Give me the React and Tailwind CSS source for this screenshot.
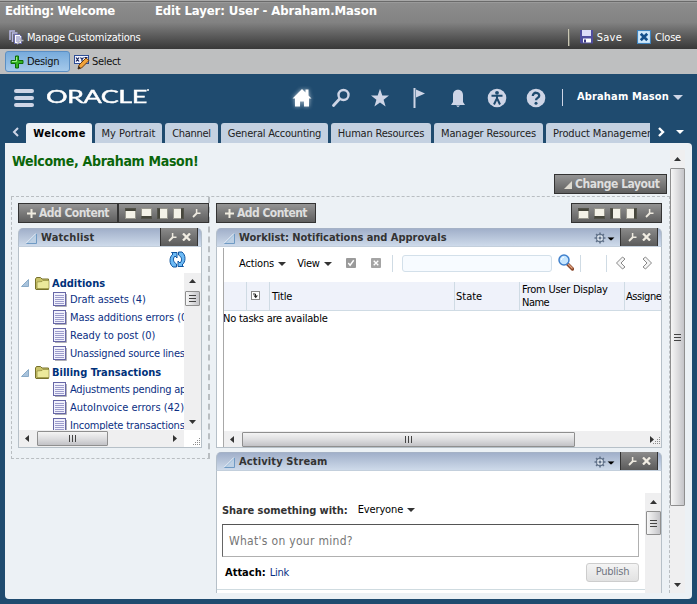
import { useLayoutEffect, useRef, useState } from "react";

/* Single-line label whose tracking is adjusted so that it spans w pixels. */
function T({ w, className = "", children }) {
  const ref = useRef(null);
  const [spacing, setSpacing] = useState(0);
  useLayoutEffect(() => {
    const natural = ref.current.offsetWidth;
    setSpacing((w - natural) / children.length);
  }, []);
  return (
    <span ref={ref} style={{ letterSpacing: spacing }} className={`inline-block shrink-0 whitespace-nowrap leading-none ${className}`}>
      {children}
    </span>
  );
}

function Caret({ className = "text-[#333]" }) {
  return (
    <svg width="8" height="4" viewBox="0 0 8 4" className={`shrink-0 ${className}`}>
      <path d="M0 0h8L4 4z" fill="currentColor" />
    </svg>
  );
}

function Wrench() {
  return (
    <svg width="9" height="10" viewBox="0 0 9 10" className="shrink-0">
      <path d="M1 9L5 5" stroke="#eeeae0" strokeWidth="1.8" />
      <path d="M4.6 1v4.2h3.9" stroke="#eeeae0" strokeWidth="1.5" fill="none" />
    </svg>
  );
}

function Cross() {
  return (
    <svg width="9" height="8" viewBox="0 0 9 8" className="shrink-0">
      <path d="M1 .5l7 7M8 .5l-7 7" stroke="#f0ece2" strokeWidth="2.3" />
    </svg>
  );
}

function Gear() {
  return (
    <svg width="12" height="12" viewBox="0 0 12 12" className="shrink-0">
      <path d="M6 .5v11M.5 6h11M2.100 2.100l7.800 7.800M9.900 2.100l-7.800 7.800" stroke="#61728a" strokeWidth="1.600" />
      <circle cx="6" cy="6" r="3.600" fill="#e3eaf2" stroke="#61728a" strokeWidth="1.100" />
      <path d="M6 3v6M3 6h6" stroke="#8493a8" strokeWidth=".8" />
      <circle cx="6" cy="6" r="1.2" fill="#61728a" />
    </svg>
  );
}

function Disclosure() {
  return (
    <svg width="11" height="11" viewBox="0 0 11 11" className="shrink-0">
      <path d="M10.500 .7v9.800H.7z" fill="#bdd0e4" stroke="#6f9ac4" />
      <path d="M.5 10L10 .5" stroke="#f4f9ff" />
    </svg>
  );
}

function LayoutTools() {
  const cell = "h-[11px] w-[11px] border-[#46463c] bg-[#f4f2e8] outline outline-[#5a5a52]/60 -outline-offset-1";
  return (
    <div className="flex h-5 w-[91px] items-center gap-[5px] border border-[#333] bg-linear-to-b from-[#929292] to-[#5f5f5f] pl-[6px]">
      <i className={`${cell} border-t-[3px]`} />
      <i className={`${cell} border-b-[3px]`} />
      <i className={`${cell} border-l-[3px]`} />
      <i className={`${cell} border-r-[3px]`} />
      <span className="ml-[3px]"><Wrench /></span>
    </div>
  );
}

function AddContent() {
  return (
    <div className="flex h-5 w-[100px] items-center border border-[#333] bg-linear-to-b from-[#959595] to-[#5f5f5f] pb-px pl-2">
      <svg width="9" height="9" viewBox="0 0 9 9" className="mr-[3px] mt-[2px]"><path d="M4.500 0v9M0 4.500h9" stroke="#f0ece0" strokeWidth="2" /></svg>
      <T w={70} className="text-[12px] font-bold text-[#dedede]">Add Content</T>
    </div>
  );
}

function PanelHeader({ title, w, gear }) {
  return (
    <div className="flex h-[19px] shrink-0 items-start rounded-t-[5px] border border-b-[#c3cfdc] border-x-[#b3bfcb] border-t-[#a5b2c6] bg-linear-to-b from-[#a1b0ca] to-[#cedaea] pl-[7px] pr-[3px]">
      <div className="mt-1"><Disclosure /></div>
      <T w={w} className="ml-[4px] mt-[3px] text-[11px] font-bold text-[#333]">{title}</T>
      <div className="ml-auto flex">
        {gear && (
          <div className="mr-[5px] flex items-center gap-[1px]">
            <Gear />
            <div className="mt-[3px] scale-90"><Caret className="text-black" /></div>
          </div>
        )}
        <div className="-mt-px flex h-[18px] w-[38px] items-center gap-[5px] border-x border-[#333] bg-linear-to-b from-[#8b8b8b] to-[#5b5b5b] pl-[7px]">
          <Wrench />
          <Cross />
        </div>
      </div>
    </div>
  );
}

function Arrow({ dir }) {
  const paths = { up: "M0 5h7L3.5 1z", down: "M0 1h7L3.5 5z", left: "M5 0v7L1 3.5z", right: "M1 0v7l4-3.5z" };
  const flat = dir === "up" || dir === "down";
  return (
    <svg width={flat ? 7 : 6} height={flat ? 6 : 7} className="shrink-0">
      <path d={paths[dir]} fill="#333" />
    </svg>
  );
}

function Grip({ upright }) {
  return upright ? (
    <span className="flex gap-[2px]"><i className="h-[7px] w-px bg-[#444]" /><i className="h-[7px] w-px bg-[#444]" /><i className="h-[7px] w-px bg-[#444]" /></span>
  ) : (
    <span className="flex flex-col gap-[2px]"><i className="h-px w-[7px] bg-[#444]" /><i className="h-px w-[7px] bg-[#444]" /><i className="h-px w-[7px] bg-[#444]" /></span>
  );
}

const vThumb = "flex w-[15px] shrink-0 items-center justify-center rounded-[1px] border border-[#8f8f8f] bg-linear-to-r from-[#f6f6f6] via-[#dedee0] to-[#c4c4c8]";
const hThumb = "flex h-[15px] shrink-0 items-center justify-center rounded-[1px] border border-[#8f8f8f] bg-linear-to-b from-[#f4f4f4] via-[#dedee0] to-[#c2c2c6]";

function Resizer() {
  return (
    <svg width="9" height="9" className="mt-auto ml-auto shrink-0">
      {[[7, 0], [5, 2], [7, 2], [3, 4], [5, 4], [7, 4], [1, 6], [3, 6], [5, 6], [7, 6]].map(([x, y]) => (
        <rect key={`${x}-${y}`} x={x} y={y} width="1" height="1" fill="#8c8c8c" />
      ))}
    </svg>
  );
}

function Folder({ label, w, className = "" }) {
  return (
    <div className={`flex shrink-0 items-center pl-[2px] ${className}`}>
      <svg width="8" height="8" viewBox="0 0 8 8"><path d="M7.5 .5v7H.5z" fill="#a9c3dc" stroke="#8aabc8" /></svg>
      <svg width="15" height="13" viewBox="0 0 15 13" className="ml-[6px]">
        <path d="M.5 12V2l1-1.5h4L7 2h6.500v10.500H1z" fill="#c9c36a" stroke="#77712b" />
        <path d="M2 11.500V5l5-.5 1-1h6v8z" fill="#ece99b" stroke="#8f8a3c" strokeWidth=".7" />
      </svg>
      <T w={w} className="ml-[2px] text-[11px] font-bold text-[#00317a]">{label}</T>
    </div>
  );
}

function Doc({ label, w }) {
  return (
    <div className="flex h-[18px] shrink-0 items-center pl-[34px]">
      <svg width="14" height="15" viewBox="0 0 14 15" className="shrink-0">
        <path d="M2 14.500h11.500V2" fill="none" stroke="#b0b0b8" />
        <rect x=".5" y=".5" width="12" height="13" fill="#f1f1fc" stroke="#6666a6" />
        <path d="M2 3.500h9M2 5.500h9M2 7.500h9M2 9.500h9M2 11.500h9" stroke="#9c9ccc" />
      </svg>
      <T w={w} className="ml-[3px] text-[11px] text-[#0b2f83]">{label}</T>
    </div>
  );
}

const tabs = [
  ["My Portrait", 54, "w-[67px]"],
  ["Channel", 39, "w-[53px]"],
  ["General Accounting", 93, "w-[107px]"],
  ["Human Resources", 86, "w-[100px]"],
  ["Manager Resources", 95, "w-[109px]"],
];

function TopBars() {
  return (
    <>
      <div className="flex h-[49px] flex-col border-t border-[#a8a8a8] bg-linear-to-b from-[#8e8e8e] via-[#828282] via-45% to-[#383838]">
        <div className="h-px shrink-0 bg-[#6a6a6a]" />
        <div className="h-px shrink-0 bg-[#9a9a9a]" />
        <div className="flex h-[18px] items-start pl-[5px] pt-[1px] text-[13px] font-bold text-white">
          <T w={110}>Editing: Welcome</T>
          <T w={222} className="ml-[40px]">Edit Layer: User - Abraham.Mason</T>
        </div>
        <div className="flex h-[28px] items-center pl-[9px] pt-[4px] text-[11px] text-white">
          <svg width="15" height="15" viewBox="0 0 15 15" className="mr-[3px]">
            <path d="M1 10V1h5M3.500 12V3h5" fill="none" stroke="#b9b9e6" strokeWidth="1.5" />
            <path d="M5.500 4.500h5l2 2v7h-7z" fill="#fff" stroke="#6c6cae" />
            <path d="M7 7h4M7 9h4M7 11h3" stroke="#7777b8" />
            <path d="M8 14l4-4M11.500 7.500v3h3" stroke="#b9bac2" strokeWidth="1.700" fill="none" />
          </svg>
          <T w={114}>Manage Customizations</T>
          <i className="ml-auto h-[17px] w-[2px] border-l border-[#c9c6b4] bg-[#77776c]" />
          <svg width="13" height="14" viewBox="0 0 13 14" className="ml-[10px]">
            <path d="M0 0h13v13.500H1L0 12.500z" fill="#4f4d9e" />
            <path d="M2 0h9v6H2z" fill="#dcdcf8" /><path d="M3 8.500h8v4H3z" fill="#fff" /><path d="M4 9.500h2v3H4z" fill="#3a3880" />
          </svg>
          <T w={25} className="ml-[4px]">Save</T>
          <svg width="14" height="14" viewBox="0 0 13 13" className="ml-[15px]">
            <rect x=".5" y=".5" width="12" height="12" fill="#cfe8fb" stroke="#3f83bd" />
            <path d="M3.500 3.500l6 6M9.500 3.500l-6 6" stroke="#14508c" strokeWidth="2.500" />
          </svg>
          <T w={26} className="ml-[4px] mr-[16px]">Close</T>
        </div>
      </div>
      <div className="flex h-[25px] items-center bg-[#bebfc0] pl-[5px] text-[11px] text-[#111]">
        <div className="flex h-[21px] w-[65px] items-center rounded-[3px] border border-[#5b8fc4] bg-linear-to-b from-[#77abdc] to-[#a5c9ea] pl-[4px]">
          <svg width="14" height="14" viewBox="0 0 14 14"><path d="M5.500 1h3v4.500H13v3H8.500V13h-3V8.500H1v-3h4.500z" fill="#35b522" stroke="#0d6a0a" /><path d="M6.500 2v4.500H2" stroke="#9bea86" fill="none" /></svg>
          <T w={32} className="ml-[3px]">Design</T>
        </div>
        <svg width="16" height="16" viewBox="0 0 16 16" className="ml-[4px] shrink-0">
          <rect x=".5" y="1.500" width="14" height="8" fill="#f2f4ff" stroke="#2d4d96" />
          <path d="M2 3.500l3 4M5 3.500l-3 4M6.500 3.500l1.500 2v2M9.500 3.500l-1.500 2M10.500 3.500h3" stroke="#14235c" strokeWidth="1.200" fill="none" />
          <path d="M4 15l1-4 7-7 3 2.500-7.500 7.500z" fill="#f2a33a" stroke="#6b3b10" /><path d="M4 15l.7-3 2 2z" fill="#222" />
        </svg>
        <T w={29} className="ml-[2px]">Select</T>
      </div>
    </>
  );
}

function Brand() {
  const c = "#ced5e6";
  return (
    <div className="flex h-[47px] items-center pl-[14px] pr-[14px]">
      <div className="flex w-5 flex-col gap-[3px]">
        <i className="h-1 rounded-[2px] bg-[#ced5e6]" /><i className="h-1 rounded-[2px] bg-[#ced5e6]" /><i className="h-1 rounded-[2px] bg-[#ced5e6]" />
      </div>
      <div className="ml-[12px] mt-[-4px] flex w-[104px] items-start text-white">
        <div className="mt-[1px] w-[101px] shrink-0">
          <div className="w-[66px] origin-left scale-x-[1.5] font-['Lato'] text-[18px] leading-none [-webkit-text-stroke:0.4px_white]">
            <T w={67}>ORACLE</T>
          </div>
        </div>
        <i className="mt-[3px] h-[2px] w-[2px] rounded-full bg-white" />
      </div>
      <div className="ml-[142px] flex items-center gap-[19px]">
        <svg width="28" height="24" viewBox="0 0 28 24" className="-mx-[4px]">
          <path d="M4.500 12.500L14 3l3.500 3.500V3.500h3V9.500L23.500 12.500h-2.500v8h-5v-5h-4v5H7v-8z" fill="#fff" className="drop-shadow-[0_0_2px_#ffffffaa]" />
        </svg>
        <svg width="20" height="20" viewBox="0 0 20 20"><circle cx="12.500" cy="7" r="5" stroke={c} strokeWidth="2.400" fill="none" /><path d="M8.500 11L2.500 17.500" stroke={c} strokeWidth="2.800" strokeLinecap="round" /></svg>
        <svg width="20" height="20" viewBox="0 0 20 20"><path d="M10 .8l2.300 6.700H19l-5.400 4.200 2 6.800L10 14.500l-5.600 4 2-6.800L1 7.500h6.700z" fill={c} /></svg>
        <svg width="20" height="20" viewBox="0 0 20 20"><path d="M4.500 0h2v20h-2zM7 1.500l9 4-9 4z" fill={c} /></svg>
        <svg width="20" height="20" viewBox="0 0 20 20"><path d="M5 14V7c0-7 10-7 10 0v7l2 3H3zM8 17.500h4l-2 1.800z" fill={c} /></svg>
        <svg width="20" height="20" viewBox="0 0 20 20"><circle cx="10" cy="10" r="9.300" fill={c} /><circle cx="10" cy="4.800" r="1.900" fill="#1f4b6f" /><path d="M4.500 7.800h11M10 8v4M9.600 11L7 16.500M10.400 11l2.600 5.500" stroke="#1f4b6f" strokeWidth="2" /></svg>
        <svg width="20" height="20" viewBox="0 0 20 20"><circle cx="10" cy="10" r="9.300" fill={c} /><path d="M6.800 8c0-4.500 6.600-4 6.400-.3 0 2.300-3.200 2-3.200 4.600" fill="none" stroke="#1f4b6f" strokeWidth="2.300" /><circle cx="10" cy="15.200" r="1.500" fill="#1f4b6f" /></svg>
      </div>
      <i className="ml-auto h-[17px] w-px bg-[#ced5e6]" />
      <T w={92} className="-mt-[2px] ml-[14px] text-[11px] font-bold text-white">Abraham Mason</T>
      <div className="ml-[4px] -mt-px"><svg width="10" height="5"><path d="M0 0h10L5 5z" fill={c} /></svg></div>
    </div>
  );
}

function TabStrip() {
  return (
    <div className="flex h-[22px] items-end pl-[12px] text-[11px] text-[#222]">
      <svg width="8" height="10" viewBox="0 0 8 10" className="mb-[6px] mr-[6px] shrink-0"><path d="M6 1L2 5l4 4" fill="none" stroke="#ced5e6" strokeWidth="2" /></svg>
      <div className="flex h-[20px] w-[66px] shrink-0 items-center justify-center rounded-t-[3px] bg-[#ecf1f6] pl-px pt-px font-bold text-black"><T w={52}>Welcome</T></div>
      {tabs.map(([label, w, width]) => (
        <div key={label} className={`ml-[3px] flex h-[20px] shrink-0 items-center justify-center rounded-t-[3px] bg-[#c4d1e1] pt-px ${width}`}>
          <T w={w}>{label}</T>
        </div>
      ))}
      <div className="ml-[3px] flex h-[20px] w-[104px] shrink-0 items-center overflow-hidden rounded-tl-[3px] bg-[#c4d1e1] pl-[7px] pt-px">
        <T w={104}>Product Management</T>
      </div>
      <svg width="7" height="10" viewBox="0 0 7 10" className="mb-[6px] ml-[8px] shrink-0"><path d="M1 1l4 4-4 4" fill="none" stroke="#fff" strokeWidth="2.400" /></svg>
      <div className="mb-[9px] ml-[11px]"><Caret className="text-white" /></div>
    </div>
  );
}

function Watchlist() {
  return (
    <div className="flex h-[262px] w-[199px] shrink-0 flex-col border-b border-l border-r-[2px] border-dashed border-[#b9bec2] pl-[6px] pt-[6px]">
      <div className="-mr-[2px] flex"><AddContent /><LayoutTools /></div>
      <div className="mt-[5px] flex h-[220px] w-[184px] flex-col">
        <PanelHeader title="Watchlist" w={53} />
        <div className="flex flex-1 flex-col border border-t-0 border-[#b6c0c8] bg-white">
          <div className="flex h-[26px] shrink-0 justify-end pr-[15px] pt-[4px]">
            <svg width="17" height="17" viewBox="0 0 17 17">
              <path d="M7.500 16H4C0 13 0 6 4 3L2.500 1.500H8V7L6 5C3.500 7.500 4 11 7.500 13z" fill="#6cbaf5" stroke="#11559f" />
              <path d="M9.500 1H13C17 4 17 11 13 14l1.500 1.500H9V10l2 2C13.500 9.500 13 6 9.500 4z" fill="#6cbaf5" stroke="#11559f" />
            </svg>
          </div>
          <div className="flex h-[157px] shrink-0">
            <div className="flex flex-1 flex-col overflow-hidden">
              <Folder label="Additions" w={53} className="h-[17px] pt-[3px]" />
              <Doc label="Draft assets (4)" w={76} />
              <Doc label="Mass additions errors (0)" w={121} />
              <Doc label="Ready to post (0)" w={85} />
              <Doc label="Unassigned source lines" w={115} />
              <Folder label="Billing Transactions" w={109} className="h-[18px] pt-[3px]" />
              <Doc label="Adjustments pending approval" w={146} />
              <Doc label="AutoInvoice errors (42)" w={114} />
              <Doc label="Incomplete transactions" w={115} />
            </div>
            <div className="flex w-[17px] shrink-0 flex-col items-center bg-[#efeff0] py-[5px]">
              <Arrow dir="up" />
              <div className={`${vThumb} mt-[7px] h-[15px]`}><Grip /></div>
              <div className="mt-auto"><Arrow dir="down" /></div>
            </div>
          </div>
          <div className="flex flex-1">
            <div className="flex w-[165px] items-center bg-[#efeff0] pl-[5px]">
              <Arrow dir="left" />
              <div className={`${hThumb} ml-[7px] w-[71px]`}><Grip upright /></div>
              <div className="ml-auto mr-[6px]"><Arrow dir="right" /></div>
            </div>
            <Resizer />
          </div>
        </div>
      </div>
    </div>
  );
}

function Worklist() {
  const sep = "h-[17px] w-px shrink-0 bg-[#cfdbe4]";
  const col = "flex shrink-0 items-center border-r border-[#cfdbe4] pl-[2px]";
  return (
    <div className="mt-[5px] flex h-[220px] shrink-0 flex-col">
      <PanelHeader title="Worklist: Notifications and Approvals" w={207} gear />
      <div className="flex flex-1 flex-col overflow-hidden border border-t-0 border-[#b6c0c8] bg-white pl-[6px] pt-px text-[11px] text-black">
        <div className="flex min-w-0 flex-1 flex-col overflow-hidden border-l border-[#a8a8a8]">
          <div className="flex h-[34px] shrink-0 items-center pb-[3px] pl-[15px]">
            <T w={35}>Actions</T>
            <div className="ml-[4px]"><Caret /></div>
            <T w={22} className="ml-[11px]">View</T>
            <div className="ml-[4px]"><Caret /></div>
            <svg width="10" height="10" viewBox="0 0 11 11" className="-mt-[2px] ml-[14px] shrink-0"><rect width="11" height="11" rx="1" fill="#9a9a9a" /><path d="M2.500 5.500l2 2.500 4-5.500" fill="none" stroke="#fff" strokeWidth="1.500" /></svg>
            <svg width="10" height="10" viewBox="0 0 11 11" className="-mt-[2px] ml-[15px] shrink-0"><rect width="11" height="11" rx="1" fill="#a4a4a4" /><path d="M3 3l5 5M8 3L3 8" stroke="#fff" strokeWidth="1.500" /></svg>
            <i className={`${sep} ml-[11px]`} />
            <div className="ml-[9px] h-[17px] w-[150px] shrink-0 rounded-[3px] border border-[#d3e0ea] bg-[#f7fbff]" />
            <svg width="16" height="17" viewBox="0 0 16 17" className="-mt-[2px] ml-[6px] shrink-0">
              <path d="M9.500 10l5 5" stroke="#8b4a2c" strokeWidth="3.400" strokeLinecap="round" /><path d="M10 10l4.500 4.500" stroke="#e3a27e" strokeWidth="1.200" />
              <circle cx="6" cy="6" r="5" fill="#c6e6ff" stroke="#4080cc" strokeWidth="1.500" /><path d="M3.500 6c0-2 1-2.700 2.500-2.700" stroke="#fff" fill="none" />
            </svg>
            <i className={`${sep} ml-[6px]`} />
            <i className={`${sep} ml-[25px]`} />
            <svg width="11" height="14" viewBox="0 0 11 14" className="-mt-[2px] ml-[8px] shrink-0"><path d="M7.500 1L1.500 7l6 6L10 11 6 7l4-4z" fill="#f4f4f4" stroke="#888" /></svg>
            <svg width="11" height="14" viewBox="0 0 11 14" className="-mt-[2px] ml-[16px] shrink-0"><path d="M3.500 1l6 6-6 6L1 11l4-4-4-4z" fill="#f4f4f4" stroke="#888" /></svg>
            <i className={`${sep} ml-[8px]`} />
          </div>
          <div className="flex h-[29px] shrink-0 border-b border-[#cfdbe4] bg-[#eff2fa]">
            <div className={`${col} w-[23px]`} />
            <div className={`${col} w-[23px]`}>
              <svg width="9" height="9" viewBox="0 0 9 9" className="ml-[2px] -mt-px"><rect x=".5" y=".5" width="8" height="8" fill="#fff" stroke="#888" /><path d="M2 3h2.500v2" fill="none" stroke="#222" /><path d="M2.500 4.500h4.500l-2.300 2.700z" fill="#222" /></svg>
            </div>
            <div className={`${col} w-[185px]`}><T w={20}>Title</T></div>
            <div className={`${col} w-[65px]`}><T w={26} className="ml-[-1px]">State</T></div>
            <div className={`${col} w-[105px]`}>
              <div className="flex flex-col items-start gap-[2px]"><T w={86}>From User Display</T><T w={27}>Name</T></div>
            </div>
            <div className="flex shrink-0 items-center pl-px"><T w={46}>Assignees</T></div>
          </div>
          <div className="flex flex-1 items-start pt-[2px]"><T w={105} className="-ml-px">No tasks are available</T></div>
          <div className="flex h-[16px] shrink-0 items-center bg-[#efeff0] pl-[5px]">
            <Arrow dir="left" />
            <div className={`${hThumb} ml-[7px] w-[333px]`}><Grip upright /></div>
            <div className="ml-auto"><Arrow dir="right" /></div>
            <div className="-ml-[4px] flex h-full w-[10px] pb-px"><Resizer /></div>
          </div>
        </div>
      </div>
    </div>
  );
}

function ActivityStream() {
  return (
    <div className="mt-[4px] flex min-h-0 flex-1 flex-col">
      <PanelHeader title="Activity Stream" w={89} gear />
      <div className="flex min-h-0 flex-1 border-x border-[#b6c0c8] bg-white pt-[22px] text-[11px]">
        <div className="flex w-[428px] shrink-0 flex-col pl-[5px] pt-[8px]">
          <div className="flex h-[18px] shrink-0 items-center">
            <T w={126} className="font-bold text-[#333]">Share something with:</T>
            <T w={46} className="-mt-px ml-[10px] text-black">Everyone</T>
            <div className="ml-[4px] -mt-px"><Caret /></div>
          </div>
          <div className="mt-[5px] flex h-[33px] w-[417px] shrink-0 items-center border border-[#b0b0b0] border-l-[#666] border-t-[#555] pl-[6px]">
            <T w={124} className="text-[12px] text-[#767676]">What's on your mind?</T>
          </div>
          <div className="mt-[5px] flex h-[20px] shrink-0 items-center pl-[3px]">
            <T w={41} className="font-bold text-black">Attach:</T>
            <T w={19} className="ml-[4px] text-[#0b2f83]">Link</T>
            <div className="ml-auto mr-[6px] flex h-[19px] w-[53px] items-center justify-center rounded-[3px] border border-[#cdcdcd] bg-linear-to-b from-[#f4f4f4] to-[#e2e2e2] pb-px text-[#6f7480]"><T w={33}>Publish</T></div>
          </div>
          <i className="-ml-[5px] mt-[7px] h-px shrink-0 bg-[#cfdbe0]" />
        </div>
        <div className="flex flex-1 flex-col items-center bg-[#efeff0] pt-[6px]">
          <Arrow dir="up" />
          <div className={`${vThumb} mt-[6px] h-[24px]`}><Grip /></div>
        </div>
      </div>
    </div>
  );
}

export default function App() {
  return (
    <div className="flex h-[604px] w-[697px] flex-col overflow-hidden bg-[#1f4b6f] font-['DejaVu_Sans_Condensed','DejaVu_Sans',sans-serif] text-[11px]">
      <TopBars />
      <Brand />
      <TabStrip />
      <div className="ml-[5px] mr-[5px] flex h-[456px] shrink-0 rounded-b-[4px] rounded-tr-[4px] bg-[#ecf1f5] pb-[6px] pl-[6px]">
        <div className="flex w-[659px] shrink-0 flex-col">
          <div className="h-[31px] shrink-0 pl-px pt-[11px]"><T w={187} className="text-[14px] font-bold text-[#0a650a]">Welcome, Abraham Mason!</T></div>
          <div className="flex h-[22px] shrink-0 justify-end pr-[3px]">
            <div className="flex h-[20px] w-[113px] items-center border border-[#333] bg-linear-to-b from-[#959595] to-[#5f5f5f] pl-[9px]">
              <svg width="8" height="8" className="mr-[3px] mt-[2px]"><path d="M8 0v8H0z" fill="#dedad0" /></svg>
              <T w={85} className="text-[12px] font-bold text-[#dedede]">Change Layout</T>
            </div>
          </div>
          <div className="flex min-h-0 flex-1 border-r border-t border-dashed border-[#b9bec2]">
            <Watchlist />
            <div className="ml-[6px] flex w-[446px] flex-col pt-[6px]">
              <div className="flex justify-between"><AddContent /><LayoutTools /></div>
              <Worklist />
              <ActivityStream />
            </div>
          </div>
        </div>
        <div className="mt-[7px] flex w-[15px] shrink-0 flex-col items-center bg-[#efeff0]">
          <div className="mt-[6px]"><Arrow dir="up" /></div>
          <div className={`${vThumb} mt-[6px] h-[338px]`}><Grip /></div>
          <div className="mb-[5px] mt-auto"><Arrow dir="down" /></div>
        </div>
      </div>
    </div>
  );
}
